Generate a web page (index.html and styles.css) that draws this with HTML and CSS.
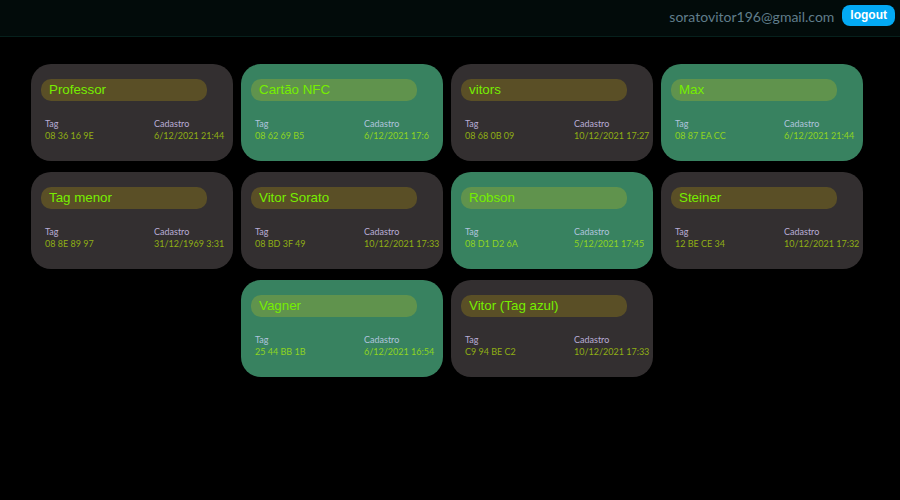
FILE: index.html
```html
<!DOCTYPE html>
<html lang="pt-BR">
<head>
<meta charset="utf-8">
<title>Tags</title>
<link rel="stylesheet" href="styles.css">
</head>
<body>
<header class="topbar">
  <span class="email">soratovitor196@gmail.com</span>
  <button class="logout" type="button">logout</button>
</header>
<main class="cards">
  <article class="card">
    <input class="name" type="text" aria-label="Nome" value="Professor">
    <dl class="info"><div><dt>Tag</dt><dd>08 36 16 9E</dd></div><div><dt>Cadastro</dt><dd>6/12/2021 21:44</dd></div></dl>
  </article>
  <article class="card active">
    <input class="name" type="text" aria-label="Nome" value="Cartão NFC">
    <dl class="info"><div><dt>Tag</dt><dd>08 62 69 B5</dd></div><div><dt>Cadastro</dt><dd>6/12/2021 17:6</dd></div></dl>
  </article>
  <article class="card">
    <input class="name" type="text" aria-label="Nome" value="vitors">
    <dl class="info"><div><dt>Tag</dt><dd>08 68 0B 09</dd></div><div><dt>Cadastro</dt><dd>10/12/2021 17:27</dd></div></dl>
  </article>
  <article class="card active">
    <input class="name" type="text" aria-label="Nome" value="Max">
    <dl class="info"><div><dt>Tag</dt><dd>08 87 EA CC</dd></div><div><dt>Cadastro</dt><dd>6/12/2021 21:44</dd></div></dl>
  </article>
  <article class="card">
    <input class="name" type="text" aria-label="Nome" value="Tag menor">
    <dl class="info"><div><dt>Tag</dt><dd>08 8E 89 97</dd></div><div><dt>Cadastro</dt><dd>31/12/1969 3:31</dd></div></dl>
  </article>
  <article class="card">
    <input class="name" type="text" aria-label="Nome" value="Vitor Sorato">
    <dl class="info"><div><dt>Tag</dt><dd>08 BD 3F 49</dd></div><div><dt>Cadastro</dt><dd>10/12/2021 17:33</dd></div></dl>
  </article>
  <article class="card active">
    <input class="name" type="text" aria-label="Nome" value="Robson">
    <dl class="info"><div><dt>Tag</dt><dd>08 D1 D2 6A</dd></div><div><dt>Cadastro</dt><dd>5/12/2021 17:45</dd></div></dl>
  </article>
  <article class="card">
    <input class="name" type="text" aria-label="Nome" value="Steiner">
    <dl class="info"><div><dt>Tag</dt><dd>12 BE CE 34</dd></div><div><dt>Cadastro</dt><dd>10/12/2021 17:32</dd></div></dl>
  </article>
  <article class="card active">
    <input class="name" type="text" aria-label="Nome" value="Vagner">
    <dl class="info"><div><dt>Tag</dt><dd>25 44 BB 1B</dd></div><div><dt>Cadastro</dt><dd>6/12/2021 16:54</dd></div></dl>
  </article>
  <article class="card">
    <input class="name" type="text" aria-label="Nome" value="Vitor (Tag azul)">
    <dl class="info"><div><dt>Tag</dt><dd>C9 94 BE C2</dd></div><div><dt>Cadastro</dt><dd>10/12/2021 17:33</dd></div></dl>
  </article>
</main>
</body>
</html>
```
FILE: styles.css
```css
* {
  box-sizing: border-box;
}

body {
  margin: 0;
  background: #000;
  font-family: Lato, "Liberation Sans", sans-serif;
}

.topbar {
  display: flex;
  justify-content: flex-end;
  align-items: flex-start;
  gap: 8px;
  padding: 5px 5px 10px;
  background: #020b0a;
  border-bottom: 1px solid #06201c;
}

.email {
  padding-top: 4px;
  font-size: 14px;
  line-height: 16px;
  color: #607d8b;
}

.logout {
  padding: 3px 8px;
  border: 0;
  border-radius: 8px;
  background: #03a9f4;
  color: #fff;
  font-family: "Liberation Sans", Arial, sans-serif;
  font-size: 12px;
  font-weight: bold;
  line-height: 15px;
}

.cards {
  display: flex;
  flex-wrap: wrap;
  justify-content: center;
  gap: 11px 8px;
  padding: 27px 26px 27px 20px;
}

.card {
  width: 202px;
  padding: 15px 10px 19px;
  border-radius: 20px;
  background: #332f30;
}

.active {
  background: #388260;
}

.name {
  display: block;
  width: 166px;
  padding: 3px 8px;
  border: 0;
  border-radius: 10px;
  background: #5a4f26;
  color: #76ee00;
  font-family: "Liberation Sans", Arial, sans-serif;
  line-height: 16px;
}

.active .name {
  background: #60934d;
}

.info {
  display: grid;
  grid-template-columns: 109px 1fr;
  margin: 17px 0 0;
  padding-left: 4px;
  white-space: nowrap;
}

.info dt {
  font-size: 9px;
  line-height: 12px;
  color: #b9add6;
}

.info dd {
  margin: 0;
  font-size: 9px;
  line-height: 12px;
  color: #8fae14;
}

.active dt {
  color: #b0c4de;
}

.active dd {
  color: #8fd41f;
}
```
